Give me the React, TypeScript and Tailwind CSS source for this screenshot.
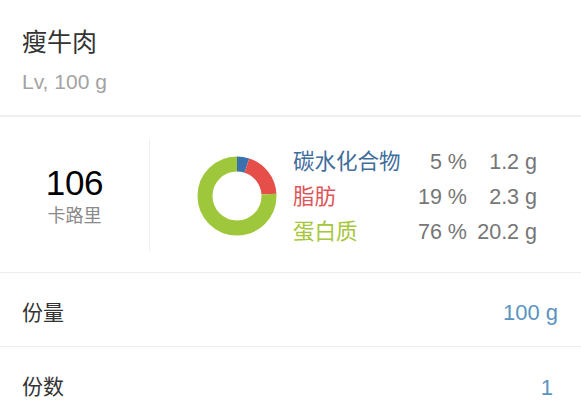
import React from 'react';

const macros = [
  { name: '碳水化合物', pct: '5 %', grams: '1.2 g', color: 'text-[#3f6d9c]' },
  { name: '脂肪', pct: '19 %', grams: '2.3 g', color: 'text-[#e0555a]' },
  { name: '蛋白质', pct: '76 %', grams: '20.2 g', color: 'text-[#a6c63c]' },
];

const Donut = () => {
  const r = 32;
  const c = 2 * Math.PI * r;
  const segs = [
    { pct: 0.05, color: '#3b72ad' },
    { pct: 0.19, color: '#e64e4a' },
    { pct: 0.76, color: '#9fc73b' },
  ];
  let offset = 0;
  return (
    <svg width="80" height="80" viewBox="0 0 80 80">
      <g transform="rotate(-90 40 40)">
        {segs.map((s, i) => {
          const el = (
            <circle
              key={i}
              cx="40"
              cy="40"
              r={r}
              fill="none"
              stroke={s.color}
              strokeWidth="15"
              strokeDasharray={`${s.pct * c} ${c}`}
              strokeDashoffset={-offset * c}
            />
          );
          offset += s.pct;
          return el;
        })}
      </g>
    </svg>
  );
};

export default function App() {
  return (
    <div
      className="w-[581px] h-[414px] bg-white overflow-hidden"
      style={{ fontFamily: '"Liberation Sans", "Noto Sans CJK SC", sans-serif' }}
    >
      {/* header */}
      <div className="pl-[22px] pt-[27px] h-[117px] border-b-2 border-[#efefef]">
        <div className="text-[25px] leading-[30px] text-[#333]">瘦牛肉</div>
        <div className="mt-[12px] text-[21px] leading-[26px] text-[#a3a3a3]">Lv, 100 g</div>
      </div>

      {/* nutrition */}
      <div className="h-[156px] flex items-center border-b border-[#ececec]">
        <div className="w-[150px] shrink-0 h-[112px] border-r border-[#efefef] flex flex-col items-center justify-center">
          <div className="mt-[2px] text-[35px] leading-[38px] text-black tracking-[-0.3px]">106</div>
          <div className="mt-[3px] text-[18px] leading-[22px] text-[#8a8a8a]">卡路里</div>
        </div>
        <div className="ml-[47px] mt-[2px] shrink-0">
          <Donut />
        </div>
        <div className="ml-[16px] flex flex-col gap-[13px] mt-[4px]">
          {macros.map((m) => (
            <div key={m.name} className="flex items-center h-[22px] text-[21.5px] leading-[22px] whitespace-nowrap">
              <span className={`w-[110px] shrink-0 ${m.color}`}>{m.name}</span>
              <span className="w-[64px] shrink-0 text-right text-[#767676]">{m.pct}</span>
              <span className="w-[70px] shrink-0 text-right text-[#767676]">{m.grams}</span>
            </div>
          ))}
        </div>
      </div>

      {/* rows */}
      <div className="h-[74px] pt-[6px] flex items-center justify-between pl-[22px] pr-[23px] border-b border-[#ececec]">
        <span className="text-[21px] text-[#333]">份量</span>
        <span className="text-[22px] text-[#5a93bf]">100 g</span>
      </div>
      <div className="h-[74px] pt-[6px] flex items-center justify-between pl-[22px] pr-[28px]">
        <span className="text-[21px] text-[#333]">份数</span>
        <span className="text-[22px] text-[#5a93bf]">1</span>
      </div>
    </div>
  );
}
